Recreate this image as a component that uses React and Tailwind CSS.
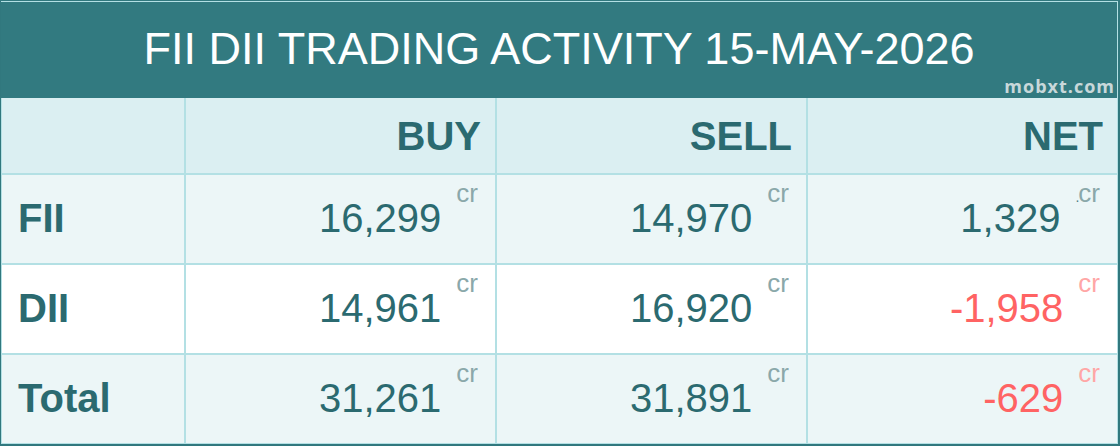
const ROWS = [
  {
    label: "FII",
    bg: "bg-[#ecf6f7]",
    cells: [
      { value: "16,299" },
      { value: "14,970" },
      { value: "1,329", dot: true },
    ],
  },
  {
    label: "DII",
    bg: "bg-white",
    cells: [
      { value: "14,961" },
      { value: "16,920" },
      { value: "-1,958", negative: true },
    ],
  },
  {
    label: "Total",
    bg: "bg-[#ecf6f7]",
    cells: [
      { value: "31,261" },
      { value: "31,891" },
      { value: "-629", negative: true },
    ],
  },
];

const HEADINGS = ["BUY", "SELL", "NET"];

function ValueCell({ value, negative, dot, bg }) {
  return (
    <div className={`${bg} flex items-center justify-end pr-[17px]`}>
      <span
        className={`text-[40px] leading-[40px] mt-[-3px] ${
          negative ? "text-[#ff6363]" : "text-[#2b6a70]"
        }`}
      >
        {value}
      </span>
      <span
        className={`self-start mt-[5px] ml-[15px] text-[26px] leading-[26px] ${
          negative ? "text-[#ffa6a6]" : "text-[#8aa8aa]"
        }`}
      >
        {dot && <span className="text-[#4f7f84] text-[14px] mr-[-1px]">.</span>}
        cr
      </span>
    </div>
  );
}

export default function App() {
  return (
    <div className="w-[1120px] h-[446px] bg-[#31787e] pl-px pt-px pr-[2px] pb-[2px] font-['Liberation_Sans',Arial,sans-serif]">
      <div className="relative h-[97px] bg-[#327a80] border-t border-r border-[#b3e0e4] flex justify-center pt-[24px]">
        <h1 className="text-white text-[45px] leading-[45px] font-normal">
          FII DII TRADING ACTIVITY 15-MAY-2026
        </h1>
        <span className="absolute right-[2px] bottom-[1px] text-[18px] leading-[22px] tracking-[1px] font-bold text-[#c8d8da] font-['Open_Sans',sans-serif]">
          mobxt.com
        </span>
      </div>
      <div className="grid grid-cols-[182px_309px_309px_309px] grid-rows-[75px_88px_88px_88px] gap-[2px] bg-[#b3e0e4] px-px pb-px">
        <div className="bg-[#dbeff2]" />
        {HEADINGS.map((h) => (
          <div
            key={h}
            className="bg-[#dbeff2] flex items-center justify-end pr-[14px] text-[40px] leading-[40px] font-bold text-[#2b6a70]"
          >
            {h}
          </div>
        ))}
        {ROWS.map((row) => (
          <>
            <div
              key={row.label}
              className={`${row.bg} flex items-center pl-[16px] text-[40px] leading-[40px] font-bold text-[#2b6a70]`}
            >
              <span className="mt-[-3px]">{row.label}</span>
            </div>
            {row.cells.map((c, i) => (
              <ValueCell key={row.label + i} bg={row.bg} {...c} />
            ))}
          </>
        ))}
      </div>
    </div>
  );
}
